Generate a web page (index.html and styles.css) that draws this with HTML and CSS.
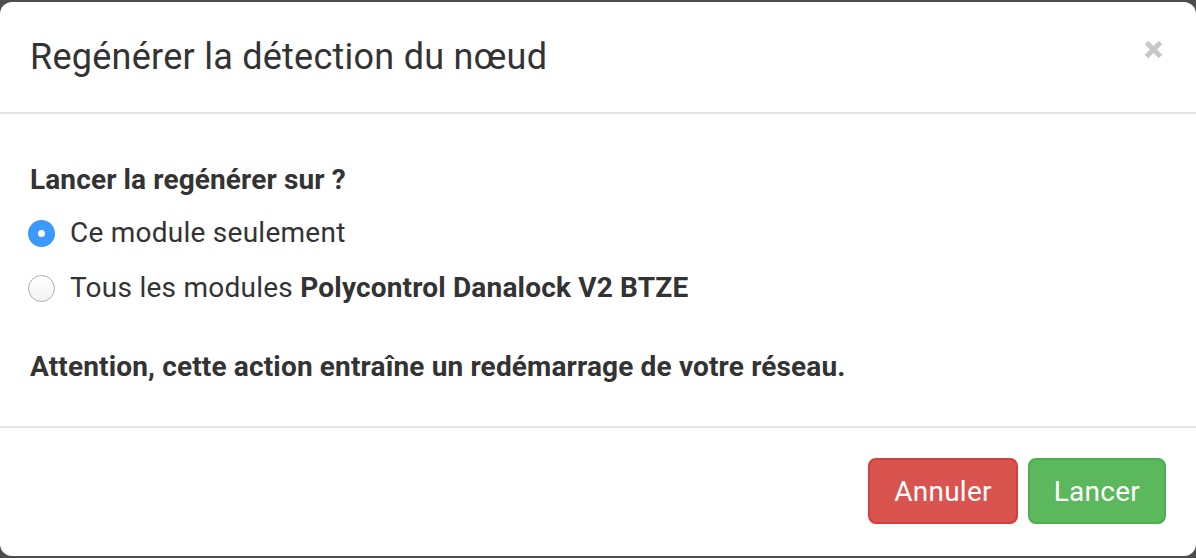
FILE: index.html
```html
<!DOCTYPE html>
<html lang="fr">
<head>
<meta charset="utf-8">
<title>Regénérer la détection du nœud</title>
<link rel="stylesheet" href="styles.css">
</head>
<body>
<div class="modal">
  <div class="modal-header">
    <h4 class="modal-title">Regénérer la détection du nœud</h4>
    <button class="close" type="button" aria-label="Fermer">
      <svg width="19" height="19" viewBox="0 0 19 19"><path d="M2.5 2.5 L16.5 16.5 M16.5 2.5 L2.5 16.5" stroke="#c8c8c8" stroke-width="5" stroke-linecap="butt"/></svg>
    </button>
  </div>
  <div class="modal-body">
    <div class="form-label">Lancer la regénérer sur ?</div>
    <label class="radio first">
      <span class="radio-btn checked"></span>
      <span>Ce module seulement</span>
    </label>
    <label class="radio">
      <span class="radio-btn"></span>
      <span>Tous les modules <b>Polycontrol Danalock V2 BTZE</b></span>
    </label>
    <p class="warning">Attention, cette action entraîne un redémarrage de votre réseau.</p>
  </div>
  <div class="modal-footer">
    <button class="btn btn-danger" type="button">Annuler</button>
    <button class="btn btn-success" type="button">Lancer</button>
  </div>
</div>
</body>
</html>
```

FILE: styles.css
```css
html, body {
  margin: 0;
  padding: 0;
}
body {
  background: #4d4d4d;
  font-family: Roboto, "Helvetica Neue", Arial, sans-serif;
  color: #333;
  height: 558px;
  overflow: hidden;
  letter-spacing: 0.25px;
}
.modal {
  margin-top: 2px;
  width: 1196px;
  height: 554px;
  background: #fff;
  border-radius: 12px;
  display: flex;
  flex-direction: column;
  box-sizing: border-box;
}
.modal-header {
  padding: 30px 30px;
  border-bottom: 2px solid #e5e5e5;
  display: flex;
  align-items: center;
  justify-content: space-between;
}
.modal-title {
  margin: 0;
  font-size: 36px;
  font-weight: 400;
  line-height: 50px;
  color: #333;
}
.close {
  border: 0;
  background: transparent;
  padding: 0;
  margin-right: 3px;
  margin-top: -16px;
  width: 19px;
  height: 19px;
  display: block;
}
.close svg { display: block; }
.modal-body {
  padding: 30px 30px 30px;
  flex: 0 0 auto;
  height: 252px;
}
.form-label {
  margin-top: 16px;
  font-weight: 700;
  font-size: 28px;
  line-height: 40px;
  letter-spacing: 0.12px;
}
.radio {
  display: flex;
  align-items: center;
  font-size: 28px;
  line-height: 40px;
  margin-top: 15px;
}
.radio.first {
  margin-top: 13px;
}
.radio b {
  font-weight: 700;
  letter-spacing: 0.18px;
}
.radio-btn {
  width: 27px;
  height: 27px;
  border-radius: 50%;
  box-sizing: border-box;
  margin-left: -2px;
  margin-right: 15px;
  border: 1.5px solid #adadad;
  background: linear-gradient(#ffffff, #f2f2f2);
  flex: 0 0 auto;
  position: relative;
}
.radio-btn.checked {
  border: none;
  background: #3b99fc;
}
.radio-btn.checked::after {
  content: "";
  position: absolute;
  left: 10px;
  top: 10px;
  width: 7px;
  height: 7px;
  border-radius: 50%;
  background: #fff;
}
.warning {
  margin: 39px 0 0;
  font-weight: 700;
  font-size: 28px;
  line-height: 40px;
  letter-spacing: 0.15px;
}
.modal-footer {
  border-top: 2px solid #e5e5e5;
  padding: 30px;
  display: flex;
  justify-content: flex-end;
  gap: 10px;
}
.btn {
  font-family: Roboto, "Helvetica Neue", Arial, sans-serif;
  font-size: 28px;
  letter-spacing: 0.25px;
  line-height: 40px;
  padding: 12px 24px;
  height: 66px;
  border-radius: 8px;
  color: #fff;
  border: 2px solid transparent;
  box-sizing: border-box;
}
.btn-danger {
  background: #d9534f;
  border-color: #d43f3a;
}
.btn-success {
  background: #5cb85c;
  border-color: #4cae4c;
}
```
